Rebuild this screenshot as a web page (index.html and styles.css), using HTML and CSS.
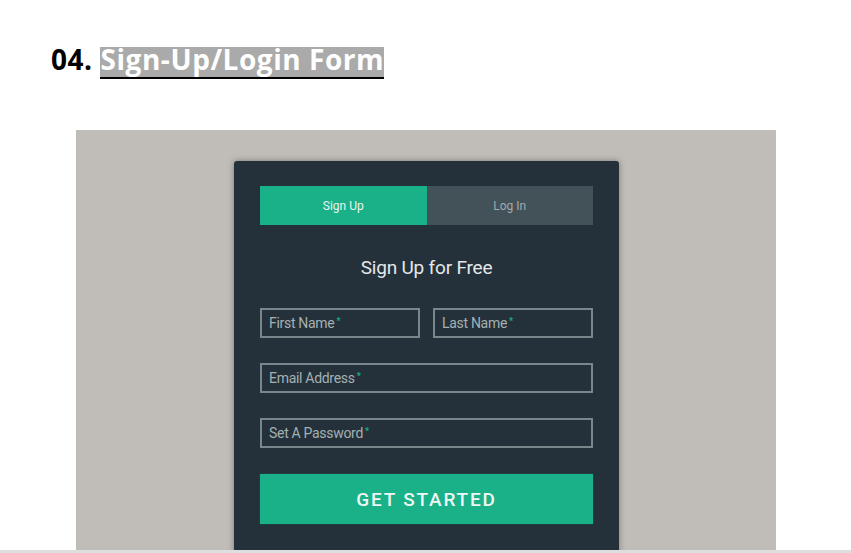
FILE: index.html
```html
<!DOCTYPE html>
<html>
<head>
<meta charset="utf-8">
<link rel="stylesheet" href="styles.css">
</head>
<body>
<div class="page">
  <h2 class="heading"><span class="num">04.</span> <span class="hl">Sign-Up/Login Form</span></h2>
  <div class="shot">
    <div class="card">
      <div class="tabs">
        <div class="tab active">Sign Up</div>
        <div class="tab">Log In</div>
      </div>
      <h1 class="title">Sign Up for Free</h1>
      <div class="row two">
        <div class="field">First Name<span class="req">*</span></div>
        <div class="field">Last Name<span class="req">*</span></div>
      </div>
      <div class="row">
        <div class="field">Email Address<span class="req">*</span></div>
      </div>
      <div class="row">
        <div class="field">Set A Password<span class="req">*</span></div>
      </div>
      <div class="button">GET STARTED</div>
    </div>
  </div>
</div>
<div class="bottombar"></div>
</body>
</html>
```
FILE: styles.css
```css
html, body {
  margin: 0;
  padding: 0;
  background: #ffffff;
  overflow: hidden;
  height: 553px;
}
.page {
  padding: 47px 0 0 51px;
  height: 503px;
}
.heading {
  margin: 0;
  font-family: "Open Sans", "Liberation Sans", sans-serif;
  font-weight: 700;
  font-size: 28px;
  line-height: 24px;
  color: #000;
  letter-spacing: 0.55px;
}
.hl {
  display: inline-block;
  line-height: 24px;
  padding-bottom: 6px;
  border-bottom: 2px solid #000;
  background: #aaaaaa;
  color: #ffffff;
}
.shot {
  margin: 51px 0 0 25px;
  width: 700px;
  height: 420px;
  background: #c0bcb7;
  box-sizing: border-box;
  padding: 31px 0 0 158px;
  overflow: hidden;
}
.card {
  width: 385px;
  height: 420px;
  background: #24313a;
  border-radius: 3px;
  box-shadow: 0 0 6px rgba(0,0,0,0.35);
  box-sizing: border-box;
  padding: 25px 26px 0 26px;
  font-family: "Roboto", "Liberation Sans", sans-serif;
}
.tabs {
  display: flex;
  height: 39px;
}
.tab {
  flex: 1;
  background: #435158;
  color: #a0abb0;
  font-size: 12px;
  display: flex;
  align-items: center;
  justify-content: center;
}
.tab.active {
  background: #1ab188;
  color: #e6f5ef;
}
.title {
  margin: 31px 0 0 0;
  text-align: center;
  font-weight: 400;
  font-size: 19px;
  line-height: 24px;
  color: #e3e8ea;
  letter-spacing: -0.2px;
}
.row {
  display: flex;
  gap: 13px;
  margin-top: 25px;
}
.row.two {
  margin-top: 28px;
}
.field {
  flex: 1;
  height: 30px;
  box-sizing: border-box;
  border: 2px solid #78878c;
  padding-left: 7px;
  display: flex;
  align-items: center;
  font-size: 14px;
  color: #a5b0b3;
  letter-spacing: -0.3px;
}
.req {
  color: #1ab188;
  font-size: 9px;
  font-weight: 700;
  align-self: flex-start;
  margin-top: 6px;
  margin-left: 2px;
}
.button {
  margin-top: 26px;
  height: 50px;
  background: #1ab188;
  color: #eef7f3;
  font-size: 19px;
  font-weight: 500;
  letter-spacing: 1.8px;
  display: flex;
  align-items: center;
  justify-content: center;
  box-shadow: 0 0 1px #14805f;
}
.bottombar {
  position: absolute;
  left: 0;
  top: 550px;
  width: 851px;
  height: 3px;
  background: #dedede;
}
```
